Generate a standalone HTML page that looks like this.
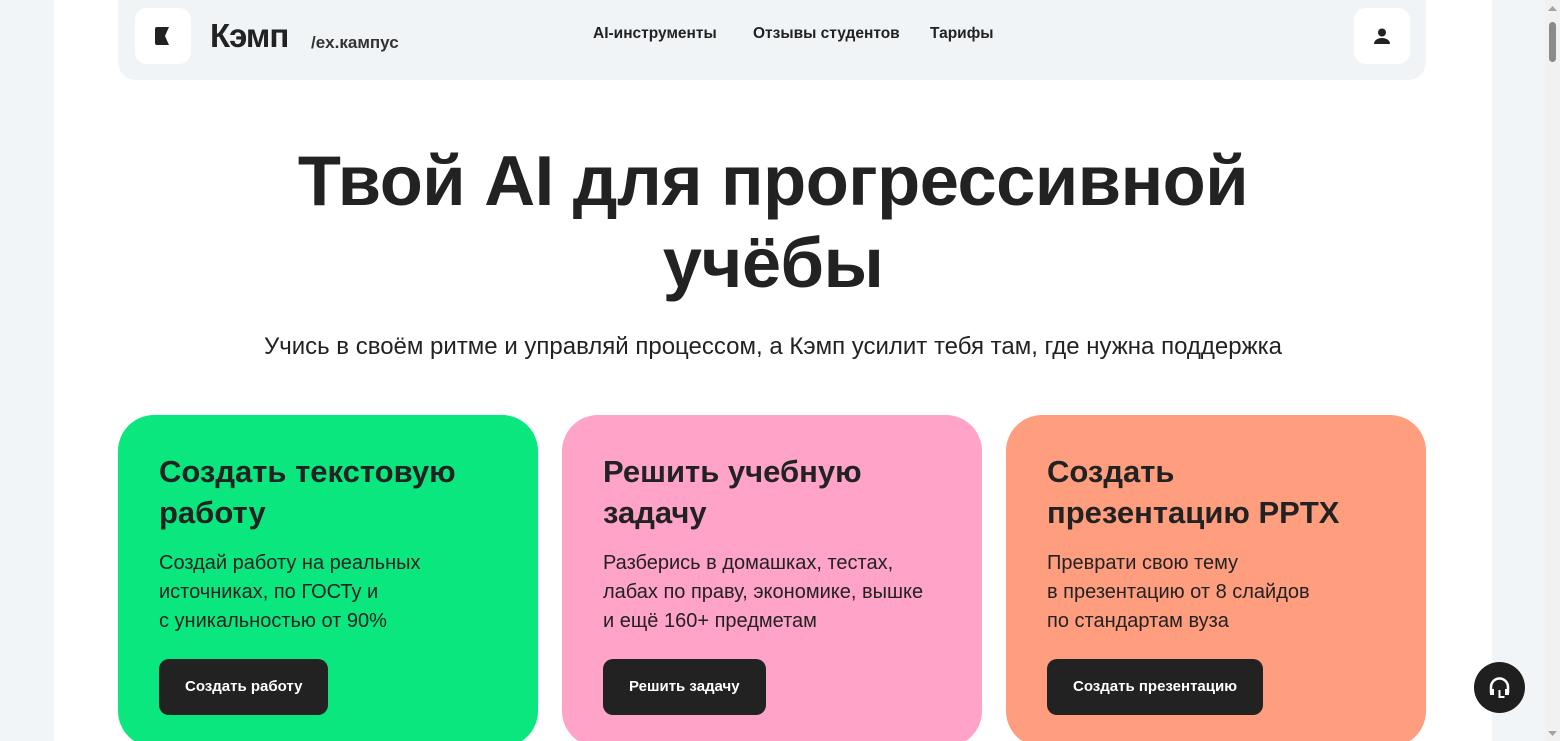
<!DOCTYPE html>
<html><head><meta charset="utf-8"><style>
*{box-sizing:border-box;margin:0;padding:0}
html,body{width:1560px;height:741px;overflow:hidden}
body{background:#f1f5f8;font-family:"Liberation Sans","DejaVu Sans",sans-serif;color:#222;position:relative}
.main{position:absolute;left:54px;top:0;width:1438px;height:741px;background:#fff;overflow:hidden}
.hdr{position:absolute;left:118px;top:0;width:1308px;height:80px;background:#f0f4f7;border-radius:0 0 18px 18px}
.logo{position:absolute;left:17px;top:8px;width:56px;height:56px;background:#fff;border-radius:12px}
.brand{position:absolute;left:92px;top:17px;font-size:33px;font-weight:700;letter-spacing:-1px;color:#222}
.ex{position:absolute;left:193px;top:33px;font-size:17px;font-weight:700;color:#333}
.nav{position:absolute;top:25px;font-size:15.5px;font-weight:700;color:#222}
.user{position:absolute;left:1236px;top:8px;width:56px;height:56px;background:#fff;border-radius:12px}
h1{position:absolute;left:0;width:1438px;top:140px;text-align:center;font-size:70.5px;line-height:82px;font-weight:700;color:#222;letter-spacing:-0.5px}
.sub{position:absolute;left:0;width:1438px;top:333px;text-align:center;font-size:24px;color:#222}
.card{position:absolute;top:415px;width:420px;height:332px;border-radius:36px;padding:36px 41px}
.card h2{font-size:31px;line-height:41px;font-weight:700;color:#222;margin-bottom:16px}
.card p{font-size:20px;line-height:29px;color:#222}
.btn{position:absolute;left:41px;top:244px;height:56px;background:#222;color:#fff;border-radius:10px;font-size:15px;font-weight:700;line-height:56px;padding:0 26px}
.sb{position:absolute;right:0;top:0;width:15px;height:741px;background:#f1f1f1}
</style></head><body>
<div class="main">
<div class="hdr" style="left:64px">
 <div class="logo"><svg width="56" height="56"><path d="M20 21a2 2 0 0 1 2-2h12l-4 9 4 9H22a2 2 0 0 1-2-2z" fill="#222"/></svg></div>
 <div class="brand">Кэмп</div>
 <div class="ex">/ex.кампус</div>
 <div class="nav" style="left:475px">AI-инструменты</div>
 <div class="nav" style="left:635px">Отзывы студентов</div>
 <div class="nav" style="left:812px">Тарифы</div>
 <div class="user"><svg width="56" height="56"><circle cx="28" cy="24.5" r="4" fill="#222"/><path d="M20 36c0-4 4-6 8-6s8 2 8 6z" fill="#222"/></svg></div>
</div>
<h1>Твой AI для прогрессивной<br>учёбы</h1>
<div class="sub">Учись в своём ритме и управляй процессом, а Кэмп усилит тебя там, где нужна поддержка</div>
<div class="card" style="left:64px;background:#0be77f"><h2>Создать текстовую<br>работу</h2><p>Создай работу на реальных<br>источниках, по ГОСТу и<br>с уникальностью от 90%</p><div class="btn">Создать работу</div></div>
<div class="card" style="left:508px;background:#ffa3c9"><h2>Решить учебную<br>задачу</h2><p>Разберись в домашках, тестах,<br>лабах по праву, экономике, вышке<br>и ещё 160+ предметам</p><div class="btn">Решить задачу</div></div>
<div class="card" style="left:952px;background:#ff9e7e"><h2>Создать<br>презентацию PPTX</h2><p>Преврати свою тему<br>в презентацию от 8 слайдов<br>по стандартам вуза</p><div class="btn">Создать презентацию</div></div>
</div>
<svg style="position:absolute;left:1474px;top:662px" width="51" height="51"><circle cx="25.5" cy="25.5" r="25.5" fill="#1f1f1f"/><path d="M17 31v-6a8.5 8.5 0 0 1 17 0v6" stroke="#fff" stroke-width="2.5" fill="none"/><rect x="16" y="27" width="4" height="6" fill="#fff"/><rect x="31" y="27" width="4" height="6" fill="#fff"/><path d="M25.5 28v7h5" stroke="#fff" stroke-width="2" fill="none"/></svg>
<div class="sb"><svg width="15" height="741"><path d="M3 11l4.5-5 4.5 5z" fill="#a3a3a3"/><rect x="4" y="22" width="7" height="40" rx="3.5" fill="#8a8a8a"/><path d="M3 731l4.5 5 4.5-5z" fill="#a3a3a3"/></svg></div>
</body></html>
